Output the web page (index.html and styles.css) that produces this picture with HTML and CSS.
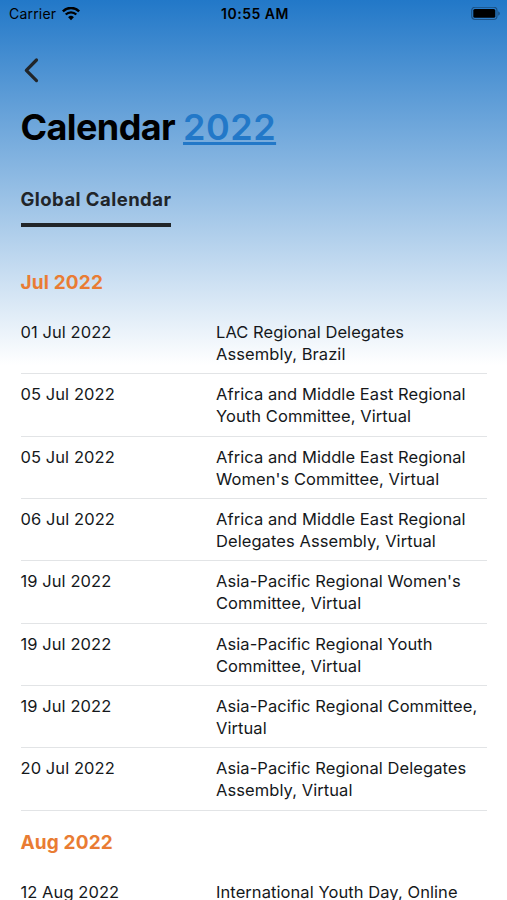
FILE: index.html
```html
<!DOCTYPE html>
<html lang="en">
<head>
    <meta charset="UTF-8">
    <title>Calendar 2022</title>
    <meta name="viewport" content="width=device-width, initial-scale=1">
    <link rel="stylesheet" href="styles.css">
</head>
<body>
    <div class="screen">
        <div class="status-bar">
            <div class="carrier">
                <span>Carrier</span>
                <svg class="wifi" viewBox="0 0 18 14" width="18" height="14">
                    <path d="M.8 4.400a11.500 11.500 0 0 1 16.400 0" fill="none" stroke="#000" stroke-width="2.5"/>
                    <path d="M3.700 7.500a7.500 7.500 0 0 1 10.600 0" fill="none" stroke="#000" stroke-width="2.300"/>
                    <path d="M9 13.200L6.100 10.300a4.100 4.100 0 0 1 5.800 0z"/>
                </svg>
            </div>
            <span class="time">10:55 AM</span>
            <svg class="battery" viewBox="0 0 30 14" width="30" height="14">
                <rect x="0.700" y="0.200" width="25.300" height="12.300" rx="3.500" fill="none" stroke="#000" stroke-opacity="0.35" stroke-width="1.200"/>
                <rect x="2.300" y="2" width="22" height="8.800" rx="1.600"/>
                <path d="M27.300 4.300v4.400c2-.8 2-3.600 0-4.400z" fill-opacity="0.4"/>
            </svg>
        </div>

        <button class="back" aria-label="Back">
            <svg viewBox="0 0 16 26" width="16" height="26">
                <path d="M12.500 3L2.300 13.300l10.200 10.300" fill="none" stroke="#212529" stroke-width="3.200" stroke-linecap="round" stroke-linejoin="round"/>
            </svg>
        </button>

        <h1>Calendar <a href="#">2022</a></h1>

        <div class="tabs">
            <span class="tab">Global Calendar</span>
        </div>

        <h2>Jul 2022</h2>
        <ul class="events">
            <li><span class="date">01 Jul 2022</span><span class="name">LAC Regional Delegates<br>Assembly, Brazil</span></li>
            <li><span class="date">05 Jul 2022</span><span class="name">Africa and Middle East Regional<br>Youth Committee, Virtual</span></li>
            <li><span class="date">05 Jul 2022</span><span class="name">Africa and Middle East Regional<br>Women's Committee, Virtual</span></li>
            <li><span class="date">06 Jul 2022</span><span class="name">Africa and Middle East Regional<br>Delegates Assembly, Virtual</span></li>
            <li><span class="date">19 Jul 2022</span><span class="name">Asia-Pacific Regional Women's<br>Committee, Virtual</span></li>
            <li><span class="date">19 Jul 2022</span><span class="name">Asia-Pacific Regional Youth<br>Committee, Virtual</span></li>
            <li><span class="date">19 Jul 2022</span><span class="name">Asia-Pacific Regional Committee,<br>Virtual</span></li>
            <li><span class="date">20 Jul 2022</span><span class="name">Asia-Pacific Regional Delegates<br>Assembly, Virtual</span></li>
        </ul>

        <h2>Aug 2022</h2>
        <ul class="events">
            <li><span class="date">12 Aug 2022</span><span class="name">International Youth Day, Online</span></li>
        </ul>
    </div>
</body>
</html>
```
FILE: styles.css
```css
* {
    box-sizing: border-box;
}
body {
    margin: 0;
    background: #fff;
    color: #15181b;
    font-family: Inter, "Liberation Sans", sans-serif;
}
.screen {
    height: 900px;
    overflow: hidden;
    padding: 0 20px 0 20.5px;
    background: linear-gradient(#2278c8 0, #fff 365px) no-repeat;
}
.status-bar {
    display: grid;
    grid-template-columns: 1fr auto 1fr;
    align-items: center;
    height: 27px;
    margin: 0 -14px 0 -11.5px;
    color: #000;
    font-size: 14px;
}
.carrier {
    display: flex;
    align-items: center;
    gap: 6px;
    letter-spacing: 0.2px;
}
.time {
    font-weight: 600;
    letter-spacing: 0.5px;
}
.battery {
    justify-self: end;
}
.back {
    display: block;
    margin: 30px 0 0 3.5px;
    padding: 0;
    border: none;
    background: none;
    height: 26px;
}
h1 {
    margin: 22px 0 0;
    color: #000;
    font-size: 36px;
    line-height: 44px;
    letter-spacing: -0.6px;
}
h1 a {
    color: #2278c8;
    font-weight: 600;
    letter-spacing: 0.5px;
    text-decoration-thickness: 2.5px;
}
.tabs {
    display: flex;
    margin-top: 38px;
}
.tab {
    height: 40px;
    border-bottom: 4px solid #212529;
    color: #212529;
    font-size: 18.5px;
    font-weight: 700;
    line-height: 24px;
    letter-spacing: 0.45px;
}
h2 {
    margin: 0;
    padding-top: 44px;
    color: #e97c33;
    font-size: 19px;
    font-weight: 700;
    line-height: 24px;
    letter-spacing: 0.15px;
}
.events {
    margin: 17px 0 0;
    padding: 0;
    list-style: none;
}
.events li {
    display: grid;
    grid-template-columns: 195.5px 1fr;
    height: 62.35px;
    padding-top: 9px;
    border-bottom: 1px solid #e2e4e6;
    font-size: 16.5px;
    line-height: 22px;
    letter-spacing: 0.07px;
}
.name {
    white-space: nowrap;
}
.events + h2 {
    padding-top: 20.4px;
}
```
